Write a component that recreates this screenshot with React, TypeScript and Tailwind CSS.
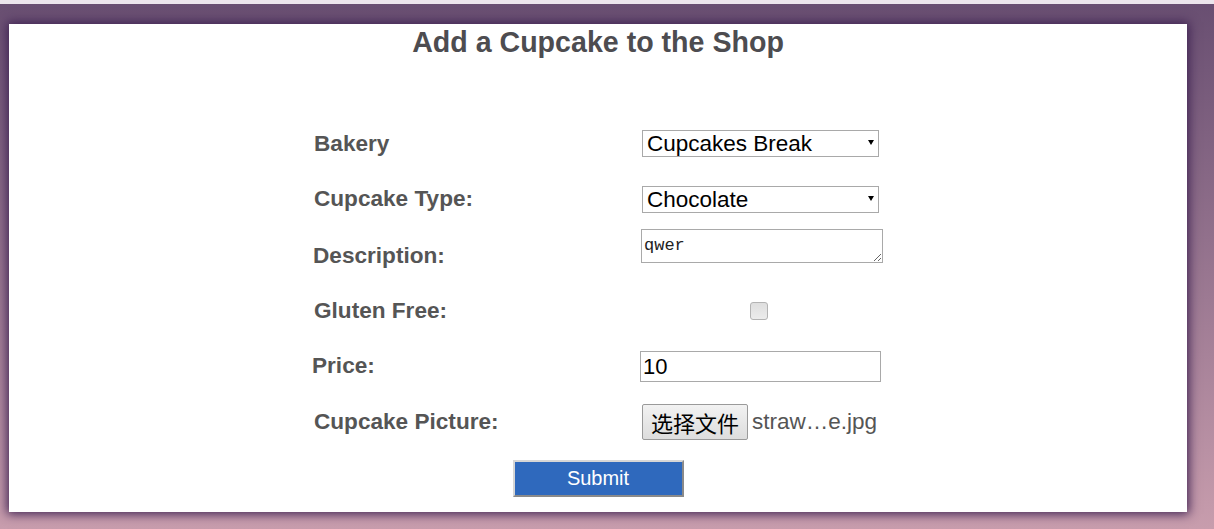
import { useState } from 'react';

const bakeries = ['Cupcakes Break', 'Sweet Corner', 'Sugar Rush'];
const types = ['Chocolate', 'Vanilla', 'Strawberry', 'Red Velvet'];

function Label({ children, className = '' }: { children: React.ReactNode; className?: string }) {
  return (
    <div className={`flex items-center font-bold text-[22.6px] text-[#555555] ${className}`}>
      {children}
    </div>
  );
}

function Select({ options }: { options: string[] }) {
  const [value, setValue] = useState(options[0]);
  return (
    <div className="relative w-[237px] h-[27px] ml-[2px]">
      <select
        value={value}
        onChange={(e) => setValue(e.target.value)}
        className="appearance-none w-full h-full bg-white border border-[#a9a9a9] pl-[4px] text-[22.5px] leading-[25px] text-black outline-none"
      >
        {options.map((o) => (
          <option key={o}>{o}</option>
        ))}
      </select>
      <span className="pointer-events-none absolute right-[5px] top-[10px] w-0 h-0 border-l-[3px] border-r-[3px] border-t-[5px] border-l-transparent border-r-transparent border-t-black" />
    </div>
  );
}

export default function App() {
  const [desc, setDesc] = useState('qwer');
  const [price, setPrice] = useState('10');
  const [gluten, setGluten] = useState(false);

  return (
    <div className="w-[1214px] h-[529px] overflow-hidden bg-gradient-to-b from-[#684e71] to-[#c89dad] font-['Liberation_Sans',Arial,sans-serif]">
      <div className="h-[4px] bg-[#ece5ec]" />
      <div className="pt-[20px] pl-[9px] pr-[27px]">
        <div className="bg-white h-[488px] shadow-[0_0_10px_2px_#3e2252]">
          <h2 className="text-center font-bold text-[28.6px] leading-[34px] text-[#4d4c50] pt-[1px]">
            Add a Cupcake to the Shop
          </h2>

          <form className="mt-[57px] flex flex-col items-center" onSubmit={(e) => e.preventDefault()}>
            <div className="grid grid-cols-[326px_244px] auto-rows-[55.6px] ml-[2px]">
              <Label>Bakery</Label>
              <div className="flex items-center">
                <Select options={bakeries} />
              </div>

              <Label>Cupcake Type:</Label>
              <div className="flex items-center">
                <Select options={types} />
              </div>

              <Label className="-ml-[1px] pt-[2px]">Description:</Label>
              <div className="flex items-start pt-[2px]">
                <textarea
                  value={desc}
                  onChange={(e) => setDesc(e.target.value)}
                  className="block w-[242px] h-[34px] ml-[1px] border border-[#a9a9a9] px-[2px] pt-[6px] text-[17px] leading-[20px] text-[#222] font-['Liberation_Mono',monospace] outline-none resize"
                />
              </div>

              <Label>Gluten Free:</Label>
              <div className="flex items-center">
                <button
                  type="button"
                  onClick={() => setGluten(!gluten)}
                  className="ml-[110px] w-[18px] h-[18px] rounded-[3px] border border-[#b3b3b3] bg-gradient-to-b from-[#dedede] to-[#ececec] flex items-center justify-center text-[13px] leading-none text-black"
                >
                  {gluten ? '✓' : ''}
                </button>
              </div>

              <Label className="-ml-[2px]">Price:</Label>
              <div className="flex items-center">
                <input
                  value={price}
                  onChange={(e) => setPrice(e.target.value)}
                  className="w-[241px] h-[31px] border border-[#a9a9a9] px-[2px] text-[22px] text-black outline-none"
                />
              </div>

              <Label>Cupcake Picture:</Label>
              <div className="flex items-center">
                <button
                  type="button"
                  className="ml-[2px] h-[36px] w-[106px] rounded-[2px] border border-[#9a9a9a] bg-gradient-to-b from-[#f2f2f2] to-[#dddddd] text-[22px] text-black font-['Noto_Sans_CJK_SC',sans-serif] leading-none"
                >
                  选择文件
                </button>
                <span className="ml-[4px] text-[22.5px] text-[#555555]">straw…e.jpg</span>
              </div>
            </div>

            <button
              type="submit"
              className="mt-[10px] w-[171px] h-[37px] bg-[#2f69bd] text-white text-[20px] border-2 border-t-[#d6d6d6] border-l-[#d6d6d6] border-b-[#8a8a8a] border-r-[#8a8a8a]"
            >
              Submit
            </button>
          </form>
        </div>
      </div>
    </div>
  );
}
